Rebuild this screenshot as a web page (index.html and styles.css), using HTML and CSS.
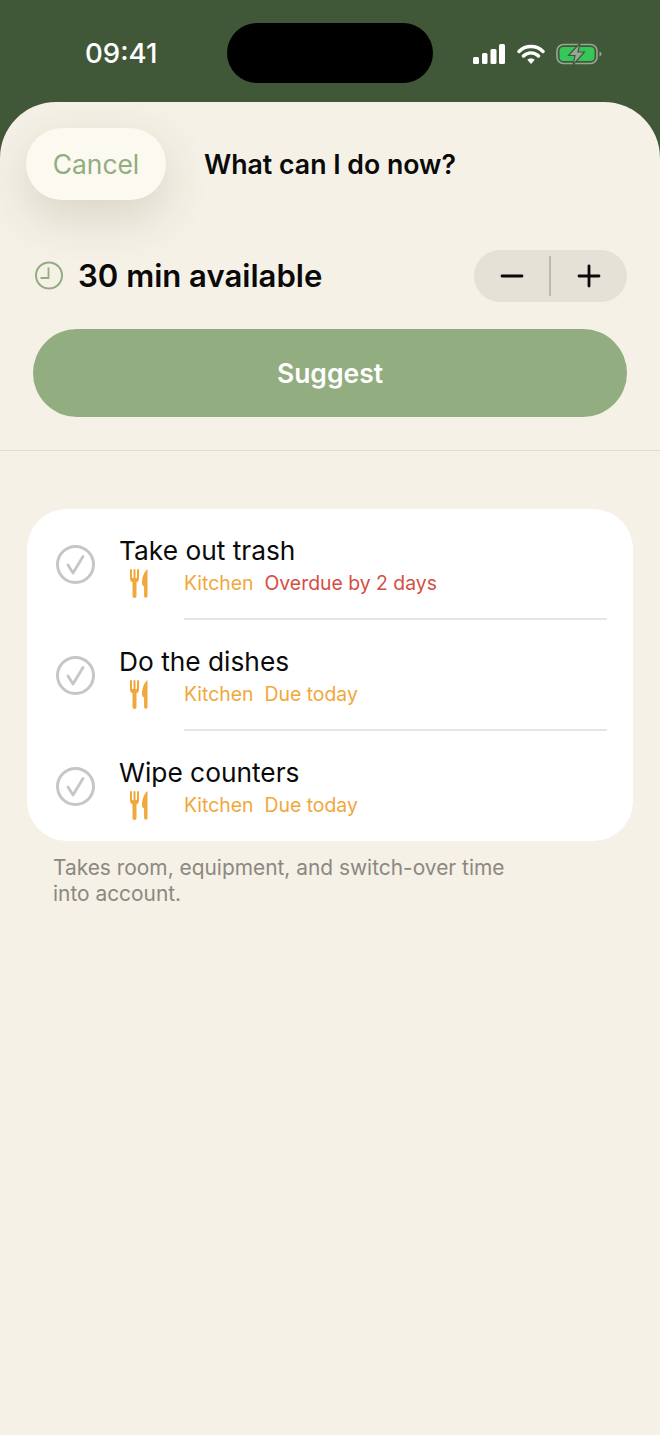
FILE: index.html
```html
<!DOCTYPE html>
<html lang="en">
<head>
  <meta charset="UTF-8">
  <title>What can I do now?</title>
  <link rel="stylesheet" href="styles.css">
</head>
<body>
  <!-- Status bar -->
  <div class="status">
    <span class="time">09:41</span>
    <div class="island"></div>
    <div class="status-icons">
      <svg width="32" height="20" viewBox="0 0 32 20"><g fill="#fff"><rect x="0" y="13" width="6" height="7" rx="1.500"/><rect x="9" y="9" width="5.500" height="11" rx="1.500"/><rect x="17.500" y="5" width="6" height="15" rx="1.500"/><rect x="26" y="0" width="6" height="20" rx="1.500"/></g></svg>
      <svg width="28" height="21" viewBox="0 0 28 21"><path d="M2 7.500a17 17 0 0 1 24 0M6.500 12a10.500 10.500 0 0 1 15 0" fill="none" stroke="#fff" stroke-width="3.400" stroke-linecap="round"/><path d="M10.300 15.800a5.200 5.200 0 0 1 7.400 0L14 20z" fill="#fff"/></svg>
      <svg class="battery" width="46" height="22" viewBox="0 0 46 22"><rect x="1" y="1.500" width="40" height="19" rx="6.500" fill="none" stroke="#9aa596" stroke-width="1.600"/><rect x="3.500" y="4" width="35" height="14" rx="4" fill="#35c759"/><path d="M43.500 8.500v5c1.200-.4 2-1.300 2-2.500s-.8-2.100-2-2.500z" fill="#9aa596"/><path d="M24 0 12.500 12.500H19L17 22l11.500-13H22z" fill="#9aa596" stroke="#405838" stroke-width="1.200"/></svg>
    </div>
  </div>

  <div class="sheet">
    <div class="nav">
      <button class="cancel">Cancel</button>
      <h1 class="title">What can I do now?</h1>
    </div>

    <div class="time-row">
      <svg class="clock" width="30" height="30" viewBox="0 0 30 30"><circle cx="15" cy="14.500" r="13" fill="none" stroke="#92ad80" stroke-width="2"/><path d="M14.500 6.500v10.500H6.500" fill="none" stroke="#92ad80" stroke-width="1.800"/></svg>
      <span class="available">30 min available</span>
      <div class="stepper">
        <span class="step"><svg width="24" height="24" viewBox="0 0 24 24"><path d="M2 12h20" stroke="#0a0a0a" stroke-width="2.800" stroke-linecap="round"/></svg></span>
        <span class="step-line"></span>
        <span class="step"><svg width="24" height="24" viewBox="0 0 24 24"><path d="M2 12h20M12 2v20" stroke="#0a0a0a" stroke-width="2.800" stroke-linecap="round"/></svg></span>
      </div>
    </div>

    <button class="suggest">Suggest</button>
    <hr class="divider">

    <div class="card">
      <div class="row">
        <svg class="check" width="39" height="39" viewBox="0 0 39 39"><circle cx="19.500" cy="19.500" r="18" fill="none" stroke="#c6c6c8" stroke-width="3"/><path d="M12 20l5 8L27 11.500" fill="none" stroke="#c6c6c8" stroke-width="2.800" stroke-linecap="round" stroke-linejoin="round"/></svg>
        <div class="row-body">
          <div class="task">Take out trash</div>
          <div class="meta">
            <svg class="cutlery" width="18" height="30" viewBox="0 0 18 30"><path d="M0 2a1 1 0 0 1 2 0v8h1.500V2a1 1 0 0 1 2 0v8H7V2a1 1 0 0 1 2 0v8.500c0 2-1 3.300-2.500 3.800v13.700a2 2 0 0 1-4 0V14.300C1 13.800 0 12.500 0 10.500zM17.500 1v27a1.700 1.700 0 0 1-3.400 0V18.500C12.800 18 12 16.800 12 15c0-6 2.500-12 5.500-14z" fill="#f0a83c"/></svg>
            <span class="room">Kitchen</span>
            <span class="overdue">Overdue by 2 days</span>
          </div>
        </div>
      </div>
      <div class="row">
        <svg class="check" width="39" height="39" viewBox="0 0 39 39"><circle cx="19.500" cy="19.500" r="18" fill="none" stroke="#c6c6c8" stroke-width="3"/><path d="M12 20l5 8L27 11.500" fill="none" stroke="#c6c6c8" stroke-width="2.800" stroke-linecap="round" stroke-linejoin="round"/></svg>
        <div class="row-body">
          <div class="task">Do the dishes</div>
          <div class="meta">
            <svg class="cutlery" width="18" height="30" viewBox="0 0 18 30"><path d="M0 2a1 1 0 0 1 2 0v8h1.500V2a1 1 0 0 1 2 0v8H7V2a1 1 0 0 1 2 0v8.500c0 2-1 3.300-2.500 3.800v13.700a2 2 0 0 1-4 0V14.300C1 13.800 0 12.500 0 10.500zM17.500 1v27a1.700 1.700 0 0 1-3.400 0V18.500C12.800 18 12 16.800 12 15c0-6 2.500-12 5.500-14z" fill="#f0a83c"/></svg>
            <span class="room">Kitchen</span>
            <span class="due">Due today</span>
          </div>
        </div>
      </div>
      <div class="row">
        <svg class="check" width="39" height="39" viewBox="0 0 39 39"><circle cx="19.500" cy="19.500" r="18" fill="none" stroke="#c6c6c8" stroke-width="3"/><path d="M12 20l5 8L27 11.500" fill="none" stroke="#c6c6c8" stroke-width="2.800" stroke-linecap="round" stroke-linejoin="round"/></svg>
        <div class="row-body">
          <div class="task">Wipe counters</div>
          <div class="meta">
            <svg class="cutlery" width="18" height="30" viewBox="0 0 18 30"><path d="M0 2a1 1 0 0 1 2 0v8h1.500V2a1 1 0 0 1 2 0v8H7V2a1 1 0 0 1 2 0v8.500c0 2-1 3.300-2.500 3.800v13.700a2 2 0 0 1-4 0V14.300C1 13.800 0 12.500 0 10.500zM17.500 1v27a1.700 1.700 0 0 1-3.400 0V18.500C12.800 18 12 16.800 12 15c0-6 2.500-12 5.500-14z" fill="#f0a83c"/></svg>
            <span class="room">Kitchen</span>
            <span class="due">Due today</span>
          </div>
        </div>
      </div>
    </div>

    <p class="note">Takes room, equipment, and switch-over time<br>into account.</p>
  </div>
</body>
</html>
```
FILE: styles.css
```css
* {
  box-sizing: border-box;
}
html, body {
  height: 100%;
}
body {
  margin: 0;
  display: flex;
  flex-direction: column;
  background: #405838;
  font-family: Inter, "Liberation Sans", sans-serif;
  color: #0a0a0a;
  overflow: hidden;
}

/* status bar */
.status {
  height: 102px;
  flex: none;
  display: flex;
  align-items: flex-start;
  padding: 23px 0 0 85px;
}
.time {
  flex: none;
  width: 142px;
  margin-top: 14px;
  color: #fff;
  font-size: 27.6px;
  line-height: 33px;
  font-weight: 500;
}
.island {
  flex: none;
  width: 206px;
  height: 60px;
  border-radius: 30px;
  background: #000;
}
.status-icons {
  flex: none;
  display: flex;
  align-items: center;
  gap: 12px;
  margin-left: 40px;
  margin-top: 20px;
}
.battery {
  margin-left: -1px;
}

/* sheet */
.sheet {
  flex: 1;
  background: #f5f1e6;
  border-radius: 56px 56px 0 0;
  padding-top: 26px;
}
.nav {
  display: flex;
  align-items: center;
  height: 72px;
  padding-left: 26px;
  position: relative;
}
.cancel {
  width: 140px;
  height: 72px;
  border: 0;
  border-radius: 36px;
  background: #fcf9f0;
  color: #92ad80;
  font: 400 26.4px Inter, sans-serif;
  box-shadow: 0 16px 48px rgba(70,60,30,0.16);
}
.title {
  margin: 0 auto;
  position: absolute;
  left: 0;
  right: 0;
  text-align: center;
  font-size: 26.7px;
  font-weight: 600;
  pointer-events: none;
}
.time-row {
  display: flex;
  align-items: center;
  height: 52px;
  margin-top: 50px;
  padding: 0 33px 0 34px;
}
.clock {
  flex: none;
}
.available {
  margin-left: 14px;
  font-size: 31.1px;
  font-weight: 600;
}
.stepper {
  margin-left: auto;
  width: 153px;
  height: 52px;
  display: flex;
  align-items: center;
  border-radius: 26px;
  background: #e5e1d7;
}
.step {
  flex: 1;
  display: flex;
  justify-content: center;
}
.step-line {
  width: 2px;
  height: 40px;
  margin-left: -1px;
  background: #bcb9b0;
}
.suggest {
  display: block;
  width: 594px;
  height: 88px;
  margin: 27px 0 0 33px;
  border: 0;
  border-radius: 44px;
  background: #92ad80;
  color: #fff;
  font: 600 26.5px Inter, sans-serif;
}
.divider {
  margin: 33px 0 0;
  border: 0;
  height: 1px;
  background: #dedbcf;
}

/* task list */
.card {
  margin: 58px 27px 0;
  background: #fff;
  border-radius: 40px;
}
.row {
  display: flex;
  height: 111px;
  padding-left: 29px;
}
.row:last-child {
  height: 110px;
}
.check {
  flex: none;
  margin-top: 36px;
}
.row-body {
  flex: 1;
  margin-left: 24px;
  padding-top: 25px;
}
.task {
  font-size: 26.3px;
  line-height: 34px;
}
.meta {
  display: flex;
  align-items: center;
  height: 30px;
  font-size: 19.4px;
  color: #f0a83c;
}
.cutlery {
  margin-left: 11px;
}
.room {
  margin-left: 36px;
}
.overdue {
  margin-left: 11px;
  color: #d44f43;
}
.due {
  margin-left: 11px;
}
.row + .row {
  position: relative;
}
.row + .row::before {
  content: "";
  position: absolute;
  top: -2px;
  left: 157px;
  right: 26px;
  height: 2px;
  background: #e5e5e7;
}
.note {
  margin: 14px 0 0 53px;
  font-size: 20.9px;
  line-height: 26px;
  color: #8b8882;
}
```
